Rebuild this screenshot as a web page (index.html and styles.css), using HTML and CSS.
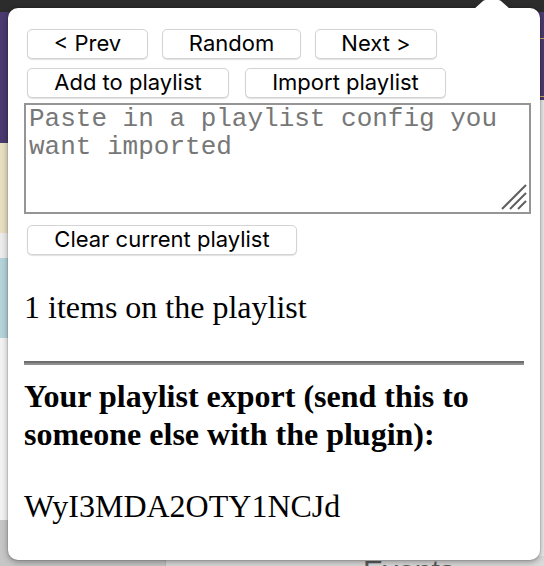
FILE: index.html
```html
<!DOCTYPE html>
<html lang="en">
<head>
<meta charset="utf-8">
<title>Playlist</title>
<link rel="stylesheet" href="styles.css">
</head>
<body>
<div class="backdrop">
  <div class="topbar"></div>
  <div class="page">
    <div class="side-left">
      <div class="sl-purple"></div>
      <div class="sl-beige"></div>
      <div class="sl-gray"></div>
      <div class="sl-blue"></div>
      <div class="sl-light"></div>
      <div class="sl-bottom"></div>
    </div>
    <div class="main">
      <div class="main-head"></div>
      <div class="main-body"></div>
      <div class="main-foot"><span class="events">Events</span></div>
    </div>
  </div>

  <div class="popup">
    <svg class="notch" width="40" height="10" viewBox="0 0 40 10"><path d="M0 10 L10 1 Q11 0 13 0 L25 0 Q27 0 28 1 L38 10 Z" fill="#fff"/></svg>
    <div class="btn-row row-one">
      <button class="btn w-prev">&lt; Prev</button>
      <button class="btn w-random">Random</button>
      <button class="btn w-next">Next &gt;</button>
    </div>
    <div class="btn-row row-two">
      <button class="btn w-add">Add to playlist</button>
      <button class="btn w-import">Import playlist</button>
    </div>
    <div class="ta-wrap">
      <textarea class="import-box" placeholder="Paste in a playlist config you want imported"></textarea>
      <svg class="grip" width="26" height="26" viewBox="0 0 26 26">
        <g stroke="#5e5e5e" stroke-width="2" stroke-linecap="butt">
          <line x1="1" y1="25" x2="25" y2="1"/>
          <line x1="9" y1="25" x2="25" y2="9"/>
          <line x1="17" y1="25" x2="25" y2="17"/>
        </g>
      </svg>
    </div>
    <div class="btn-row row-three">
      <button class="btn w-clear">Clear current playlist</button>
    </div>
    <p class="count">1 items on the playlist</p>
    <hr class="divider">
    <h4 class="export-title">Your playlist export (send this to someone else with the plugin):</h4>
    <p class="export-code">WyI3MDA2OTY1NCJd</p>
  </div>
</div>
</body>
</html>
```

FILE: styles.css
```css
html, body {
  margin: 0;
  padding: 0;
}

.backdrop {
  position: relative;
  width: 544px;
  height: 566px;
  overflow: hidden;
  display: flex;
  flex-direction: column;
  background: #ececec;
}

.topbar {
  height: 12px;
  background: #2d2c2d;
}

.page {
  flex: 1;
  display: flex;
}

.side-left {
  width: 165px;
  display: flex;
  flex-direction: column;
  border-right: 1px solid #b9b9b9;
}

.sl-purple { height: 131px; background: #4a3a6f; }
.sl-beige  { height: 90px;  background: #e8dfc1; }
.sl-gray   { height: 25px;  background: #ececec; }
.sl-blue   { height: 80px;  background: #b4d3d9; }
.sl-light  { flex: 1;       background: #f2f2f2; }
.sl-bottom { height: 46px;  background: #c6c6c6; }

.main {
  flex: 1;
  display: flex;
  flex-direction: column;
}

.main-head {
  height: 88px;
  background: #4a3a6f;
  border-top: 26px solid #4a3a6f;
  box-sizing: border-box;
  position: relative;
  box-shadow: inset 0 -3px 0 #4a3a6f, inset 0 -4px 0 #c9ad5a;
}

.main-head::before {
  content: "";
  display: block;
  height: 1px;
  background: #c9ad5a;
}

.main-body {
  flex: 1;
  background: #e9e9e9;
}

.main-foot {
  height: 10px;
  background: #dadada;
  padding-left: 197px;
}

.events {
  font-family: "Liberation Sans", Arial, sans-serif;
  font-size: 30px;
  line-height: 30px;
  color: #5a5a5a;
}

/* popup */
.popup {
  position: absolute;
  left: 8px;
  top: 8px;
  width: 532px;
  height: 552px;
  box-sizing: border-box;
  padding: 21px 16px 0;
  background: #ffffff;
  border-radius: 10px;
  box-shadow: 0 0 0 1px rgba(0, 0, 0, 0.08), 0 2px 6px rgba(0, 0, 0, 0.35);
  font-family: "Liberation Serif", "Times New Roman", serif;
  color: #000;
}

.notch {
  position: absolute;
  top: -8px;
  left: 465px;
  display: block;
}

.btn-row {
  display: flex;
  margin-left: 3px;
}

.row-one { gap: 14px; }
.row-two { gap: 16px; margin-top: 9px; }
.row-three { margin-top: 11px; }

.btn {
  height: 30px;
  padding: 0 0 2px;
  box-sizing: border-box;
  background: #ffffff;
  border: 1px solid #d3d3d3;
  border-radius: 5px;
  box-shadow: 0 1px 1px rgba(0, 0, 0, 0.12);
  font-family: Inter, "Liberation Sans", Arial, sans-serif;
  font-size: 22px;
  line-height: 26px;
  color: #000;
  text-align: center;
}

.w-prev   { width: 121px; }
.w-random { width: 139px; }
.w-next   { width: 122px; }
.w-add    { width: 202px; }
.w-import { width: 201px; }
.w-clear  { width: 270px; }

.ta-wrap {
  position: relative;
  width: 507px;
  height: 111px;
  margin-top: 5px;
}

.import-box {
  display: block;
  width: 100%;
  height: 100%;
  box-sizing: border-box;
  margin: 0;
  border: 2px solid #959595;
  padding: 0 3px;
  resize: none;
  font-family: "Liberation Mono", "Courier New", monospace;
  font-size: 26px;
  line-height: 28px;
  color: #000;
  background: #fff;
  outline: none;
}

.import-box::placeholder {
  color: #777777;
  opacity: 1;
}

.grip {
  position: absolute;
  right: 4px;
  bottom: 4px;
  display: block;
}

.count {
  margin: 34px 0 0;
  font-size: 32px;
  line-height: 37px;
}

.divider {
  width: 500px;
  height: 0;
  margin: 35px 0 0;
  border: 0;
  border-top: 2px solid #6e6e6e;
  border-bottom: 2px solid #8f8f8f;
}

.export-title {
  margin: 12px 0 0;
  font-size: 32px;
  line-height: 38px;
  font-weight: bold;
}

.export-code {
  margin: 35px 0 0;
  font-size: 32px;
  line-height: 37px;
}
```
